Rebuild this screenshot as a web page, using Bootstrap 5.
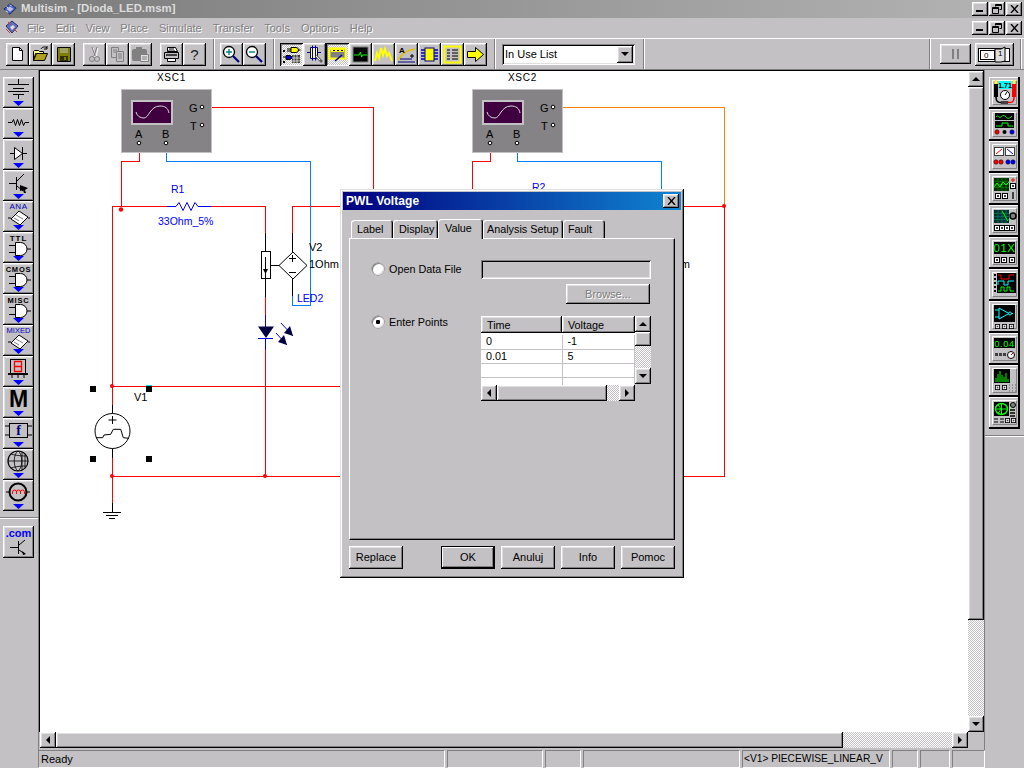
<!DOCTYPE html>
<html lang="en">
<head>
<meta charset="UTF-8">
<title>Multisim - [Dioda_LED.msm]</title>
<link href="https://cdn.jsdelivr.net/npm/bootstrap@5.3.0/dist/css/bootstrap.min.css" rel="stylesheet">
<style>
    body { margin: 0; width: 1024px; height: 768px; overflow: hidden; background: #c3c1c3; color: #000; font: 11px/1 "Liberation Sans", Arial, sans-serif; }
    svg { display: block; }
    svg text { font-family: "Liberation Sans", Arial, sans-serif; }

    .raised { background: #c3c1c3; box-shadow: inset -1px -1px #000, inset 1px 1px #fff, inset -2px -2px #808080, inset 2px 2px #dfdfdf; }
    .sunken { box-shadow: inset 1px 1px #808080, inset -1px -1px #fff, inset 2px 2px #000, inset -2px -2px #dfdfdf; }
    .dither { background: repeating-conic-gradient(#fff 0 25%, #c3c1c3 0 50%) 0 0 / 2px 2px; }

    .title-row { height: 18px; padding-left: 3px; background: linear-gradient(90deg, #7b7b7b, #b4b4b4); color: #dcdcdc; font-weight: 700; font-size: 11.4px; }
    .menu-row { height: 20px; padding-left: 5px; }
    .menu-item { color: #808080; text-shadow: 1px 1px 0 #fff; margin-right: 11px; }
    .win-group { margin-right: 2px; gap: 1px; }
    .win-btn { width: 16px; height: 14px; }
    .tool-row { height: 32px; padding-left: 6px; border-top: 1px solid #fff; border-bottom: 1px solid #808080; }
    .tb { width: 23px; height: 23px; flex: none; }
    .tb-on { box-shadow: inset 1px 1px #000, inset -1px -1px #fff, inset 2px 2px #808080; }
    .tb-help { font-size: 15px; color: #202020; }
    .tb-sep { width: 2px; height: 30px; flex: none; margin: 0 5px 0 7px; border-left: 1px solid #808080; border-right: 1px solid #fff; }
    .sep-a { margin-right: 0; }
    .sep-b { margin: 0 0 0 8px; }
    .sep-c { margin: 0; }
    .sep-d { margin: 0 2px 0 6px; }
    .combo { width: 133px; height: 21px; margin-left: 6px; padding: 2px 2px 2px 3px; background: #fff; font-size: 11px; }
    .combo-btn { width: 16px; height: 17px; }
    .pause-btn { width: 31px; height: 20px; margin-left: 9px; }
    .power-btn { width: 39px; height: 23px; margin-left: 4px; }

    .left-bar { width: 39px; flex: none; padding: 7px 0 0 3px; border-right: 1px solid #808080; }
    .pal { width: 31px; height: 31px; flex: none; }
    .pal-tall { height: 32px; }
    .pal-gap { width: 38px; height: 2px; margin: 6px 0 7px -3px; border-top: 1px solid #808080; border-bottom: 1px solid #fff; }
    .serif-f { font-family: "Liberation Serif", serif !important; }
    .right-bar { width: 40px; flex: none; padding: 7px 0 0 4px; border-left: 1px solid #808080; }
    .ins { width: 31px; height: 32px; flex: none; box-shadow: inset -2px -2px #000, inset 1px 1px #fff; background: #c3c1c3; }
    .ins-gap { width: 39px; height: 2px; margin: 6px 0 0 -4px; border-top: 1px solid #808080; border-bottom: 1px solid #fff; }

    .work { width: 945px; flex: none; }
    .sheet-row { height: 662px; border-top: 1px solid #000; }
    .sheet { width: 929px; border-left: 1px solid #000; background: #fff; }
    .vbar { width: 16px; }
    .vthumb { height: 533px; }
    .hbar { width: 928px; height: 16px; margin-left: 1px; }
    .hthumb { width: 787px; }
    .sb-btn { width: 16px; height: 16px; flex: none; }
    .ar-up, .ar-down, .ar-left, .ar-right { width: 0; height: 0; border: 4px solid transparent; }
    .ar-up { border-bottom-color: #000; margin-bottom: 4px; }
    .ar-down { border-top-color: #000; margin-top: 4px; }
    .ar-left { border-right-color: #000; margin-right: 4px; }
    .ar-right { border-left-color: #000; margin-left: 4px; }

    .status-row { height: 18px; padding-left: 38px; }
    .status-cell { height: 18px; padding: 3px 2px 0; margin-right: 2px; border: 1px solid; border-color: #808080 #fff #fff #808080; overflow: hidden; white-space: nowrap; flex: none; }
    .status-long { padding: 3px 0 0 1px; font-size: 10.2px; }
    .sw-a { width: 407px; } .sw-b { width: 96px; } .sw-c { width: 36px; } .sw-d { width: 157px; } .sw-e { width: 148px; } .sw-f { width: 26px; } .sw-g { width: 30px; } .sw-h { width: 33px; }

    .dlg { left: 300px; top: 118px; width: 344px; height: 389px; padding: 3px; background: #c3c1c3; box-shadow: inset -1px -1px #000, inset 1px 1px #dfdfdf, inset -2px -2px #808080, inset 2px 2px #fff; }
    .dlg-title { height: 18px; padding: 0 2px 0 3px; background: linear-gradient(90deg, #000080, #1084d0); color: #fff; font-weight: 700; font-size: 12px; letter-spacing: .1px; }
    .dlg-x { width: 16px; height: 14px; }
    .dlg .nav-tabs { margin: 8px 0 0 8px; height: 20px; border: 0; flex-wrap: nowrap; align-items: flex-end; }
    .dlg .nav-link { height: 18px; margin: 0; padding: 4px 0 0 6px; background: #c3c1c3; color: #000; font-size: 10.8px; border: 0; border-radius: 3px 3px 0 0; box-shadow: inset 1px 1px #fff, inset -1px 0 #000, inset -2px 0 #808080; white-space: nowrap; }
    .dlg .nav-link.active { height: 20px; padding: 4px 0 0 7px; background: #c3c1c3; color: #000; box-shadow: inset 1px 1px #fff, inset -1px 0 #000, inset -2px 0 #808080; position: relative; z-index: 1; margin-bottom: -1px; }
    .dlg .nav-item:nth-child(1) .nav-link { width: 42px; }
    .dlg .nav-item:nth-child(2) .nav-link { width: 45px; }
    .dlg .nav-item:nth-child(3) .nav-link { width: 45px; }
    .dlg .nav-item:nth-child(4) .nav-link { width: 80px; padding-left: 4px; }
    .dlg .nav-item:nth-child(5) .nav-link { width: 42px; padding-left: 5px; }
    .dlg-panel { height: 302px; margin: 0 6px; padding: 21px 0 0 22px; border-top: 1px solid #fff; border-left: 1px solid #fff; border-right: 1px solid #000; border-bottom: 1px solid #000; box-shadow: inset -1px -1px #808080; }
    .opt { width: 109px; flex: none; font-size: 10.8px; gap: 5px; height: 12px; }
    .opt-first { margin-top: 3px; }
    .opt input { width: 12px; height: 12px; margin: 0; flex: none; appearance: none; border-radius: 50%; background: #fff; box-shadow: inset 1px 1px #808080, inset -1px -1px #dfdfdf, 0 0 0 .5px #808080; }
    .opt input:checked { background: radial-gradient(circle, #000 0 2px, #fff 2.4px); }
    .file-box { width: 170px; height: 19px; flex: none; }
    .browse.btn { width: 84px; height: 20px; margin: 5px 0 0 194px; padding: 0; border: 0; border-radius: 0; font-size: 11px; color: #808080; text-shadow: 1px 1px 0 #fff; }
    .points-row { margin-top: 12px; }
    .grid-wrap { width: 170px; flex: none; }
    .grid-main { width: 154px; flex: none; }
    .grid-head { height: 17px; font-size: 10.8px; }
    .grid-head div { padding: 4px 0 0 6px; }
    .grid-body { height: 52px; overflow: hidden; background: #fff; padding-top: 2px; }
    .grid-body table { width: 154px; border-collapse: collapse; table-layout: fixed; font-size: 10.8px; }
    .grid-body td { height: 14px; padding: 0 0 0 5px; border: 1px solid #c3c1c3; border-top: 0; border-left: 0; }
    .col-t { width: 81px; }
    .grid-hbar { height: 16px; }
    .grid-hthumb { width: 110px; }
    .grid-vbar { width: 16px; height: 68px; }
    .grid-vthumb { height: 14px; }
    .dlg-actions { margin: 6px 6px 0; gap: 6px; }
    .d-btn { width: 54px; height: 23px; padding: 0; font-size: 11px; color: #000; border: 0; border-radius: 0; background: #c3c1c3; }
    .d-btn.btn:hover, .d-btn.btn:active { background: #c3c1c3; color: #000; }
    .d-default { outline: 1px solid #000; outline-offset: -1px; box-shadow: inset -2px -2px #000, inset 2px 2px #fff, inset -3px -3px #808080; }
</style>
</head>
<body>

<svg width="0" height="0" class="position-absolute">
    <defs>
        <symbol id="drop" viewBox="0 0 31 31"><path d="M10 24h11l-5.500 5z" fill="#0000ff"/></symbol>
        <symbol id="gate" viewBox="0 0 31 31"><path d="M12.500 10.500h5a6.500 6.500 0 0 1 0 13h-5zM6 13.500h6M6 20.500h6M24 17h4" fill="#fff" stroke="#000"/></symbol>
        <symbol id="pn" viewBox="0 0 31 32"><path d="M3.500 27V3.500H27" fill="none" stroke="#fff"/><path d="M4 27.500h23.500V4" fill="none" stroke="#808080"/></symbol>
        <symbol id="bx" viewBox="0 0 6 6"><rect x=".5" y=".5" width="5" height="5" fill="#fff" stroke="#000"/><rect x="2" y="2" width="2" height="2" fill="#404040"/></symbol>
    </defs>
</svg>

<div class="d-flex flex-column vh-100">

    <!-- title bar -->
    <div class="title-row d-flex align-items-center">
        <svg width="14" height="14" viewBox="0 0 16 14"><path d="M1 7l7-6 7 5-7 7z" fill="#4060c0" stroke="#202060"/><path d="M4 7l4-3 4 3-4 3z" fill="#c0c0e0"/><path d="M4 4l2 2M8 2l2 2M3 9l3 2" stroke="#fff"/></svg>
        <span class="ms-1">Multisim - [Dioda_LED.msm]</span>
        <div class="ms-auto d-flex win-group">
            <div class="win-btn raised d-flex align-items-end justify-content-center pb-1"><svg width="8" height="2"><rect width="7" height="2"/></svg></div>
            <div class="win-btn raised d-flex align-items-center justify-content-center"><svg width="10" height="10"><path d="M3.500 2.500V.5h6v5h-2M.5 3.500h6v6h-6zM.5 4.500h6M3.500 1.500h6" fill="none" stroke="#000"/></svg></div>
            <div class="win-btn raised d-flex align-items-center justify-content-center"><svg width="9" height="8"><path d="M1 0l7 8M8 0L1 8" stroke="#000" stroke-width="1.400"/></svg></div>
        </div>
    </div>

    <!-- menu bar -->
    <div class="menu-row d-flex align-items-center">
        <svg class="me-2" width="14" height="16" viewBox="0 0 14 16"><path d="M1 6l6-5 6 5-6 7z" fill="#6070c0" stroke="#303060"/><path d="M3 2l3 3M1 9l4 4M8 8l4 4" stroke="#c04040"/><path d="M5 7l3-2 2 2-3 3z" fill="#e0e0e0"/></svg>
        <span class="menu-item">File</span><span class="menu-item">Edit</span><span class="menu-item">View</span><span class="menu-item">Place</span><span class="menu-item">Simulate</span><span class="menu-item">Transfer</span><span class="menu-item">Tools</span><span class="menu-item">Options</span><span class="menu-item">Help</span>
        <div class="ms-auto d-flex win-group">
            <div class="win-btn raised d-flex align-items-end justify-content-center pb-1"><svg width="8" height="2"><rect width="7" height="2"/></svg></div>
            <div class="win-btn raised d-flex align-items-center justify-content-center"><svg width="10" height="10"><path d="M3.500 2.500V.5h6v5h-2M.5 3.500h6v6h-6zM.5 4.500h6M3.500 1.500h6" fill="none" stroke="#000"/></svg></div>
            <div class="win-btn raised d-flex align-items-center justify-content-center"><svg width="9" height="8"><path d="M1 0l7 8M8 0L1 8" stroke="#000" stroke-width="1.400"/></svg></div>
        </div>
    </div>

    <!-- main toolbar -->
    <div class="tool-row d-flex align-items-center">
        <div class="tb raised"><svg width="23" height="23"><path d="M6.500 4.500h7l3 3v10h-10z" fill="#fff" stroke="#000"/><path d="M13.500 4.500v3h3" fill="none" stroke="#000"/></svg></div>
        <div class="tb raised"><svg width="23" height="23"><path d="M4.500 17.500v-9l1-1h4l1 1h4v2h-8z" fill="#ffff99" stroke="#000"/><path d="M4.500 17.500l3-7h11l-3 7z" fill="#b0a020" stroke="#000"/><path d="M12 6c1-2 4-3 6-1M18 3v3h-3" fill="none" stroke="#000"/></svg></div>
        <div class="tb raised me-2"><svg width="23" height="23"><path d="M5.500 4.500h13v14h-13z" fill="#808000" stroke="#000"/><rect x="8" y="5" width="8" height="5" fill="#a0a060"/><rect x="8" y="13" width="8" height="5" fill="#303000"/><rect x="12" y="14" width="2" height="3" fill="#808000"/></svg></div>
        <div class="tb raised"><svg width="23" height="23"><g fill="none" stroke="#fff" transform="translate(1 1)"><path d="M9 4l2 9M14 4l-2 9"/></g><g fill="none" stroke="#808080"><path d="M9 4l3 9M14 4l-3 9"/><circle cx="9" cy="16" r="2.500"/><circle cx="14" cy="16" r="2.500"/></g></svg></div>
        <div class="tb raised"><svg width="23" height="23"><g fill="#c3c1c3" stroke="#808080"><path d="M5.500 4.500h7v10h-7z"/><path d="M10.500 8.500h7v10h-7z"/><path d="M7 7h4M7 9h3M12 11h4M12 13h4M12 15h4"/></g></svg></div>
        <div class="tb raised me-2"><svg width="23" height="23"><rect x="3" y="6" width="15" height="12" rx="2" fill="#808080"/><rect x="7" y="4" width="6" height="3" fill="#808080"/><path d="M11.500 11.500h8v7h-8z" fill="#dfdfdf" stroke="#808080"/><path d="M13 14h5M13 16h5" stroke="#808080"/></svg></div>
        <div class="tb raised"><svg width="23" height="23"><path d="M7.500 4.500h8l2 4h-10z" fill="#fff" stroke="#000"/><path d="M4.500 9.500h14v6h-14z" fill="#c3c1c3" stroke="#000"/><path d="M7.500 15.500h8v3h-8z" fill="#fff" stroke="#000"/><path d="M9 6h5M8 8h7" stroke="#000"/><rect x="6" y="11" width="11" height="2" fill="#404040"/></svg></div>
        <div class="tb tb-help raised d-flex align-items-center justify-content-center">?</div>
        <div class="tb-sep"></div>
        <div class="tb raised"><svg width="23" height="23"><circle cx="9" cy="9" r="5.500" fill="#fff" stroke="#000" stroke-width="1.300"/><path d="M9 6v6M6 9h6" stroke="#008080" stroke-width="1.400"/><path d="M13 13l6 6" stroke="#000080" stroke-width="2.200"/></svg></div>
        <div class="tb raised"><svg width="23" height="23"><circle cx="9" cy="9" r="5.500" fill="#fff" stroke="#000" stroke-width="1.300"/><path d="M6 9h6" stroke="#008080" stroke-width="1.400"/><path d="M13 13l6 6" stroke="#000080" stroke-width="2.200"/></svg></div>
        <div class="tb-sep"></div>
        <div class="tb tb-on dither"><svg width="23" height="23"><path d="M11 4.500h5a2.500 2.500 0 0 1 0 5h-5zM7 6h4M7 8h4M18.500 7h2" fill="#ffff00" stroke="#000"/><path d="M6 12.500h4l3 2-3 2H6z" fill="#0000c0" stroke="#000"/><path d="M3 14h3M13 14h2" stroke="#000"/><rect x="12" y="12" width="8" height="8" fill="#404040"/><path d="M14 12v8M17 12v8M12 15h8M12 18h8" stroke="#fff" stroke-width=".7"/><rect x="3" y="7" width="2" height="2"/><rect x="3" y="18" width="2" height="2"/></svg></div>
        <div class="tb raised"><svg width="23" height="23"><path d="M7.500 4.500h7v11h-7z" fill="#ffff80" stroke="#000080"/><path d="M9.500 2.500v15M12.500 2.500v15M4 9.500h3M15 9.500h3" stroke="#000080"/><path d="M13 13l6 6" stroke="#606060" stroke-width="2.500"/><path d="M13 13l4 4" stroke="#fff"/></svg></div>
        <div class="tb tb-on dither"><svg width="23" height="23"><rect x="3.500" y="5.500" width="16" height="10" fill="#808080" stroke="#ffff00" stroke-width="2"/><path d="M5 6h13v3H5z" fill="#ffff00"/><path d="M7 7.500h2M11 7.500h2M15 7.500h2" stroke="#000"/><path d="M9 18l7-6" stroke="#0000c0" stroke-width="1.500"/></svg></div>
        <div class="tb raised"><svg width="23" height="23"><rect x="4" y="4" width="15" height="15" fill="#000" stroke="#808080"/><path d="M5 12h5l1.500-3 1 5 1-2h5" fill="none" stroke="#00ff00"/></svg></div>
        <div class="tb raised"><svg width="23" height="23"><path d="M3 18l2-8 2 5 2-10 2 7 2-6 2 7 2-3 3 8" fill="none" stroke="#ffff00" stroke-width="2"/></svg></div>
        <div class="tb raised"><svg width="23" height="23"><path d="M3 17C7 10 12 7 20 6" fill="none" stroke="#e0c000" stroke-width="1.500"/><path d="M3 19h17M5 16h12" stroke="#000080"/><text x="4" y="10" font-size="8" font-weight="700">A</text><path d="M15 13h4M17 11v4" stroke="#000"/></svg></div>
        <div class="tb raised"><svg width="23" height="23"><rect x="7" y="5" width="9" height="13" fill="#ffff00" stroke="#000080"/><path d="M3 7h4M3 10h4M3 13h4M3 16h4M16 7h4M16 10h4M16 13h4M16 16h4" stroke="#0000c0" stroke-width="1.500"/></svg></div>
        <div class="tb raised"><svg width="23" height="23"><rect x="3.500" y="3.500" width="16" height="16" fill="#c3c1c3" stroke="#ffff00" stroke-width="2"/><path d="M6 7h3M11 7h6M6 10h3M11 10h6M6 13h3M11 13h6M6 16h3M11 16h6" stroke="#000"/></svg></div>
        <div class="tb raised"><svg width="23" height="23"><path d="M3.500 8.500h8v-4l8 7-8 7v-4h-8z" fill="#ffff00" stroke="#000"/></svg></div>
        <div class="tb-sep sep-a"></div>
        <div class="combo sunken d-flex align-items-center justify-content-between">
            <span>In Use List</span>
            <div class="combo-btn raised d-flex align-items-center justify-content-center"><div class="ar-down"></div></div>
        </div>
        <div class="tb-sep sep-b"></div>
        <div class="ms-auto tb-sep sep-c"></div>
        <div class="pause-btn raised d-flex align-items-center justify-content-center"><svg width="10" height="10"><rect x="1" width="2" height="10" fill="#808080"/><rect x="6" width="2" height="10" fill="#808080"/></svg></div>
        <div class="power-btn raised d-flex align-items-center justify-content-center"><svg width="33" height="17"><rect x=".5" y="2.500" width="31" height="13" fill="#fff" stroke="#000"/><rect x="2.500" y="4.500" width="14" height="9" fill="#fff" stroke="#000"/><text x="6" y="12" font-size="8">0</text><path d="M17 3h6l4-2v14l-4 1h-6z" fill="#dfdfdf" stroke="#000"/><text x="20" y="10" font-size="8">1</text></svg></div>
        <div class="tb-sep sep-d"></div>
    </div>

    <div class="d-flex flex-grow-1 overflow-hidden">
        <!-- component palette -->
        <div class="left-bar d-flex flex-column">
            <div class="pal raised"><svg width="31" height="31"><path d="M15.500 2v5M5 7.500h21M10 11.500h11M5 14.500h21M10 17.500h11M15.500 18v4" stroke="#000"/><use href="#drop"/></svg></div>
            <div class="pal raised"><svg width="31" height="31"><path d="M5 14.500h4l1.500-3 2 6 2-6 2 6 2-6 2 6 1.500-3h4" fill="none" stroke="#000"/><use href="#drop"/></svg></div>
            <div class="pal raised"><svg width="31" height="31"><path d="M7 14.500h4M11.500 8.500v12l8-6zM19.500 8v13M20 14.500h4" fill="#fff" stroke="#000"/><use href="#drop"/></svg></div>
            <div class="pal raised"><svg width="31" height="31"><path d="M6 13.500h7M13.500 7v13M14 11l7-7M14 16l6 5" fill="none" stroke="#000"/><path d="M17 15l8 3-3 2 1 3-2 0-1-3-3 1z" fill="#000"/><use href="#drop"/></svg></div>
            <div class="pal raised"><svg width="31" height="31"><text x="15.500" y="7.500" font-size="8" fill="#0000c0" text-anchor="middle" letter-spacing=".5">ANA</text><path d="M16 10l9 6-8 8-9-6z" fill="#fff" stroke="#000"/><path d="M13 14l7 4M11 17l5 3" stroke="#808080"/><path d="M5 17h3M25 17h2" stroke="#000"/><use href="#drop"/></svg></div>
            <div class="pal raised"><svg width="31" height="31"><text x="15.500" y="8.500" font-size="8" font-weight="700" text-anchor="middle" letter-spacing="1">TTL</text><use href="#gate"/><use href="#drop"/></svg></div>
            <div class="pal raised"><svg width="31" height="31"><text x="15.500" y="8.500" font-size="7.500" font-weight="700" text-anchor="middle" letter-spacing=".8">CMOS</text><use href="#gate"/><use href="#drop"/></svg></div>
            <div class="pal raised"><svg width="31" height="31"><text x="15.500" y="8.500" font-size="7.500" font-weight="700" text-anchor="middle" letter-spacing=".8">MISC</text><use href="#gate"/><use href="#drop"/></svg></div>
            <div class="pal raised"><svg width="31" height="31"><text x="15.500" y="8" font-size="7.500" fill="#0000c0" text-anchor="middle">MIXED</text><path d="M16 10l9 6-8 8-9-6z" fill="#fff" stroke="#000"/><path d="M13 14l7 4M11 17l5 3" stroke="#808080"/><path d="M5 17h3M25 17h2" stroke="#000"/><use href="#drop"/></svg></div>
            <div class="pal raised"><svg width="31" height="31"><rect x="7.500" y="3.500" width="15" height="14" fill="#c3c1c3" stroke="#000"/><rect x="5" y="17" width="20" height="2"/><path d="M11.500 5.500h7v10h-7zM11.500 10.500h7" fill="none" stroke="#ff0000" stroke-width="1.300"/><path d="M9 19v3M15 19v3M21 19v3" stroke="#000"/><use href="#drop"/></svg></div>
            <div class="pal raised"><svg width="31" height="31"><text x="15.500" y="20" font-size="23" font-weight="700" text-anchor="middle">M</text><use href="#drop"/></svg></div>
            <div class="pal raised"><svg width="31" height="31"><rect x="6.500" y="5.500" width="18" height="14" fill="#c3c1c3" stroke="#000"/><path d="M2 8h4M2 17h4M25 8h4M25 17h4" stroke="#000"/><text class="serif-f" x="15.500" y="17" font-size="14" font-weight="700" fill="#000080" text-anchor="middle">f</text><use href="#drop"/></svg></div>
            <div class="pal raised"><svg width="31" height="31"><circle cx="15" cy="12" r="10" fill="#c3c1c3" stroke="#000" stroke-width="1.200"/><path d="M5 12h20M15 2c-5 3-5 17 0 20M15 2c5 3 5 17 0 20M8 5c6 2 14 2 15 2M8 19c6-2 14-2 15-2M19 3v18M22 5v14" fill="none" stroke="#000" stroke-width=".8"/><use href="#drop"/></svg></div>
            <div class="pal raised"><svg width="31" height="31"><path d="M3 12h3M24 12h3" stroke="#000"/><circle cx="15" cy="12" r="8.500" fill="#c3c1c3" stroke="#000" stroke-width="2"/><path d="M9.500 14v-2a2 2 0 0 1 4 0v2M13.500 14v-2a2 2 0 0 1 4 0v2M17.500 14v-2a2 2 0 0 1 4 0v2" fill="none" stroke="#ff0000"/><use href="#drop"/></svg></div>
            <div class="pal-gap"></div>
            <div class="pal pal-tall raised"><svg width="31" height="32"><text x="15.500" y="11" font-size="11" font-weight="700" fill="#0000ff" text-anchor="middle">.com</text><path d="M7 21.500h8M15.500 15v13M16 19l6-5M16 24l6 4" fill="none" stroke="#000"/><path d="M19 25l4 3-3 1z" fill="#000"/></svg></div>
        </div>

        <div class="work d-flex flex-column">
            <div class="sheet-row d-flex">
                <div class="sheet position-relative">
                    <!-- schematic -->
                    <svg width="928" height="661" viewBox="40 71 928 661">
                        <g fill="none" stroke="#ff0000" shape-rendering="crispEdges">
                            <path d="M202 107.500H373.500V195M139.500 146V161.500H121.500V206.500M112.500 405V206.500H167M211 206.500H265.500V233M292.500 233V206.500H345M265.500 297V315M265.500 350V476.500M112.500 386.500H146M152 386.500H345M112.500 458V503M112.500 476.500H345"/>
                            <path d="M490.500 146V161.500H472.500V195M680 206.500H724.500V476.500H680"/>
                        </g>
                        <g fill="none" stroke="#0080ff" shape-rendering="crispEdges"><path d="M166.500 146V161.500H310.500V305.500H292.500V296"/><path d="M517.500 146V161.500H661.500V195"/></g>
                        <path d="M553 107.500H724.500V205" fill="none" stroke="#ff8000" shape-rendering="crispEdges"/>
                        <path d="M146 385.500h6" stroke="#00e0e0" shape-rendering="crispEdges"/>
                        <g fill="#ff0000"><circle cx="121" cy="209.500" r="2.200"/><circle cx="112" cy="386" r="2"/><circle cx="112" cy="476" r="2"/><circle cx="265" cy="476" r="2"/><circle cx="724" cy="206" r="2"/></g>

                        <!-- instruments -->
                        <g>
                            <rect x="121.500" y="89.500" width="90" height="63" fill="#858385" stroke="#c3c1c3"/>
                            <rect x="132" y="101" width="40" height="23" fill="#400040" stroke="#c3c1c3" stroke-width="2"/>
                            <path d="M136 112C137 116 140 118 144 118C149 118 150 106 160 106C165 106 168 108 169 113" fill="none" stroke="#d8d8d8"/>
                            <g fill="#fff" stroke="#000"><circle cx="139" cy="143" r="1.800"/><circle cx="166" cy="143" r="1.800"/><circle cx="202" cy="107" r="1.800"/><circle cx="202" cy="125" r="1.800"/></g>
                            <g font-size="11"><text x="135" y="138">A</text><text x="162" y="138">B</text><text x="189" y="112">G</text><text x="190" y="130">T</text></g>
                        </g>
                        <g>
                            <rect x="472.500" y="89.500" width="90" height="63" fill="#858385" stroke="#c3c1c3"/>
                            <rect x="483" y="101" width="40" height="23" fill="#400040" stroke="#c3c1c3" stroke-width="2"/>
                            <path d="M487 112C488 116 491 118 495 118C500 118 501 106 511 106C516 106 519 108 520 113" fill="none" stroke="#d8d8d8"/>
                            <g fill="#fff" stroke="#000"><circle cx="490" cy="143" r="1.800"/><circle cx="517" cy="143" r="1.800"/><circle cx="553" cy="107" r="1.800"/><circle cx="553" cy="125" r="1.800"/></g>
                            <g font-size="11"><text x="486" y="138">A</text><text x="513" y="138">B</text><text x="540" y="112">G</text><text x="541" y="130">T</text></g>
                        </g>
                        <g font-size="10" letter-spacing=".7"><text x="157" y="81">XSC1</text><text x="508" y="81">XSC2</text></g>

                        <!-- R1 -->
                        <path d="M167 206.500h9l3-4 4 8 4-8 4 8 4-8 3 4h13" fill="none" stroke="#0000ff"/>
                        <g font-size="10.500" fill="#0000ff"><text x="171" y="193">R1</text><text x="158" y="225">33Ohm_5%</text><text x="297" y="302">LED2</text><text x="532" y="191">R2</text></g>
                        <g font-size="11"><text x="309" y="251">V2</text><text x="309" y="268">1Ohm</text><text x="660" y="268">1Ohm</text><text x="134" y="401">V1</text></g>

                        <!-- current probe and controlled source -->
                        <g fill="#fff" stroke="#000" shape-rendering="crispEdges">
                            <path d="M265.500 233V251M265.500 279V297M292.500 233V252M292.500 278V296M271 265.500H279" fill="none"/>
                            <rect x="261.500" y="251.500" width="9" height="27"/>
                            <path d="M265.500 257V278" fill="none"/>
                        </g>
                        <path d="M263 269h5l-2.500 5z"/>
                        <path d="M293 252l14 13.500-14 13.500-14-13.500z" fill="#fff" stroke="#000"/>
                        <path d="M289 258.500h7M292.500 255v7M289 272.500h7" stroke="#000"/>

                        <!-- LED -->
                        <path d="M265.500 315V327M258 338.500H273M265.500 339V350" stroke="#0000ff" shape-rendering="crispEdges"/>
                        <path d="M258 326.500h16l-8 11.500z" fill="#000040"/>
                        <path d="M281 323l12 13M276 333l11 12" stroke="#0000ff"/>
                        <path d="M293 336l-9-3 6-7zM287 345l-9-3 6-7z" fill="#000040"/>

                        <!-- V1 -->
                        <circle cx="112.500" cy="431" r="17.500" fill="#fff" stroke="#000"/>
                        <path d="M112.500 405V413.500M112.500 448.500V458M108.500 420h8M112.500 416v8" stroke="#000"/>
                        <path d="M96 437.700H102.700L104 435L110.700 434.300L113.300 429.300H120.700L123.300 437.700L129 438.300" fill="none" stroke="#000"/>
                        <path d="M112.500 503V512M103 512.500H121M106 515.500H118M109 518.500H115" stroke="#000" shape-rendering="crispEdges"/>
                        <g><rect x="90" y="386" width="6" height="6"/><rect x="146" y="386" width="6" height="6"/><rect x="90" y="456" width="6" height="6"/><rect x="146" y="456" width="6" height="6"/></g>
                    </svg>

                    <!-- PWL Voltage dialog -->
                    <div class="dlg position-absolute d-flex flex-column">
                        <div class="dlg-title d-flex align-items-center justify-content-between">
                            <span>PWL Voltage</span>
                            <div class="dlg-x raised d-flex align-items-center justify-content-center"><svg width="9" height="8"><path d="M1 0l7 8M8 0L1 8" stroke="#000" stroke-width="1.400"/></svg></div>
                        </div>
                        <ul class="nav nav-tabs">
                            <li class="nav-item"><a class="nav-link" href="#">Label</a></li>
                            <li class="nav-item"><a class="nav-link" href="#">Display</a></li>
                            <li class="nav-item"><a class="nav-link active" href="#">Value</a></li>
                            <li class="nav-item"><a class="nav-link" href="#">Analysis Setup</a></li>
                            <li class="nav-item"><a class="nav-link" href="#">Fault</a></li>
                        </ul>
                        <div class="dlg-panel">
                            <div class="d-flex">
                                <label class="opt opt-first d-flex align-items-center"><input type="radio" name="src"><span>Open Data File</span></label>
                                <div class="file-box sunken"></div>
                            </div>
                            <button class="browse raised btn d-flex align-items-center justify-content-center">Browse...</button>
                            <div class="points-row d-flex">
                                <label class="opt d-flex align-items-center"><input type="radio" name="src" checked><span>Enter Points</span></label>
                                <div class="grid-wrap d-flex">
                                    <div class="grid-main">
                                        <div class="grid-head d-flex">
                                            <div class="raised col-t">Time</div>
                                            <div class="raised flex-grow-1">Voltage</div>
                                        </div>
                                        <div class="grid-body">
                                            <table>
                                                <tr><td class="col-t">0</td><td>-1</td></tr>
                                                <tr><td class="col-t">0.01</td><td>5</td></tr>
                                                <tr><td class="col-t">&nbsp;</td><td></td></tr>
                                                <tr><td class="col-t">&nbsp;</td><td></td></tr>
                                            </table>
                                        </div>
                                        <div class="grid-hbar d-flex">
                                            <div class="sb-btn raised d-flex align-items-center justify-content-center"><div class="ar-left"></div></div>
                                            <div class="grid-hthumb raised"></div>
                                            <div class="dither flex-grow-1"></div>
                                            <div class="sb-btn raised d-flex align-items-center justify-content-center"><div class="ar-right"></div></div>
                                        </div>
                                    </div>
                                    <div class="grid-vbar d-flex flex-column">
                                        <div class="sb-btn raised d-flex align-items-center justify-content-center"><div class="ar-up"></div></div>
                                        <div class="grid-vthumb raised"></div>
                                        <div class="dither flex-grow-1"></div>
                                        <div class="sb-btn raised d-flex align-items-center justify-content-center"><div class="ar-down"></div></div>
                                    </div>
                                </div>
                            </div>
                        </div>
                        <div class="dlg-actions d-flex">
                            <button class="btn d-btn raised me-auto">Replace</button>
                            <button class="btn d-btn d-default">OK</button>
                            <button class="btn d-btn raised">Anuluj</button>
                            <button class="btn d-btn raised">Info</button>
                            <button class="btn d-btn raised">Pomoc</button>
                        </div>
                    </div>
                </div>
                <!-- vertical scrollbar -->
                <div class="vbar d-flex flex-column">
                    <div class="sb-btn raised d-flex align-items-center justify-content-center"><div class="ar-up"></div></div>
                    <div class="vthumb raised"></div>
                    <div class="dither flex-grow-1"></div>
                    <div class="sb-btn raised d-flex align-items-center justify-content-center"><div class="ar-down"></div></div>
                </div>
            </div>
            <!-- horizontal scrollbar -->
            <div class="hbar d-flex">
                <div class="sb-btn raised d-flex align-items-center justify-content-center"><div class="ar-left"></div></div>
                <div class="hthumb raised"></div>
                <div class="dither flex-grow-1"></div>
                <div class="sb-btn raised d-flex align-items-center justify-content-center"><div class="ar-right"></div></div>
            </div>
        </div>

        <!-- instruments palette -->
        <div class="right-bar d-flex flex-column">
            <div class="ins"><svg width="31" height="32"><use href="#pn"/><rect x="6" y="3" width="2" height="4" fill="#ffff00"/><rect x="5" y="7" width="4" height="13"/><rect x="24" y="3" width="2" height="4" fill="#ffff00"/><rect x="23" y="7" width="4" height="13" fill="#ff0000"/><rect x="10" y="4" width="12" height="8" fill="#00ffff"/><text x="16" y="10.500" font-size="7" font-weight="700" text-anchor="middle">1.71</text><circle cx="16" cy="18" r="4.500" fill="#fff" stroke="#000"/><path d="M16 18l2-3" stroke="#000"/><path d="M7 20c0 6 4 6 8 5" fill="none" stroke="#000" stroke-width="1.500"/><path d="M25 20c0 6-3 6-8 5" fill="none" stroke="#ff0000" stroke-width="1.500"/><rect x="12" y="24" width="7" height="3" fill="#404040"/></svg></div>
            <div class="ins"><svg width="31" height="32"><use href="#pn"/><rect x="6" y="4" width="19" height="7"/><path d="M7 8c2-3 3 2 5 0s3-2 5 0 3 2 6-1" fill="none" stroke="#00ff00"/><rect x="6" y="12" width="19" height="7"/><path d="M7 17h6v-3h6v3h5" fill="none" stroke="#00ff00"/><circle cx="8" cy="23" r="2.200" fill="#ff0000" stroke="#000" stroke-width=".5"/><circle cx="15.500" cy="23" r="2"/><circle cx="23" cy="23" r="2.200" fill="#0000ff" stroke="#000" stroke-width=".5"/></svg></div>
            <div class="ins"><svg width="31" height="32"><use href="#pn"/><rect x="5.500" y="6.500" width="9" height="8" fill="#fff" stroke="#404040"/><rect x="16.500" y="6.500" width="9" height="8" fill="#fff" stroke="#404040"/><path d="M7 13l6-5" stroke="#ff0000"/><path d="M18 8l6 5" stroke="#0000ff"/><circle cx="7" cy="21" r="2.200" fill="#ff0000" stroke="#000" stroke-width=".5"/><circle cx="12" cy="21" r="2.200" fill="#ff0000" stroke="#000" stroke-width=".5"/><circle cx="19" cy="21" r="2.200" fill="#0000ff" stroke="#000" stroke-width=".5"/><circle cx="24" cy="21" r="2.200" fill="#0000ff" stroke="#000" stroke-width=".5"/></svg></div>
            <div class="ins"><svg width="31" height="32"><use href="#pn"/><rect x="5" y="5" width="15" height="13" fill="#003000"/><path d="M5 8.500h15M5 11.500h15M5 14.500h15M9 5v13M13 5v13M17 5v13" stroke="#008000" stroke-width=".7"/><path d="M5 14l3-4 3 4 3-5 3 3 3-3" fill="none" stroke="#00ff00"/><path d="M22 7h4M24 5v4" stroke="#ff0000"/><use href="#bx" x="21" y="10" width="6" height="6"/><use href="#bx" x="6" y="20" width="6" height="6"/><use href="#bx" x="13" y="20" width="6" height="6"/><rect x="23" y="19" width="2" height="7" fill="#404040"/></svg></div>
            <div class="ins"><svg width="31" height="32"><use href="#pn"/><rect x="5" y="5" width="15" height="13" fill="#003030"/><path d="M5 8.500h15M5 11.500h15M5 14.500h15M9 5v13M13 5v13M17 5v13" stroke="#008060" stroke-width=".7"/><path d="M13 6c3 4 4 8 6 10" fill="none" stroke="#00ff00"/><circle cx="24" cy="11" r="3" fill="#808080" stroke="#000" stroke-width="1.500"/><use href="#bx" x="5" y="20" width="6" height="6"/><use href="#bx" x="10" y="20" width="6" height="6"/><use href="#bx" x="15" y="20" width="6" height="6"/><use href="#bx" x="20" y="20" width="6" height="6"/></svg></div>
            <div class="ins"><svg width="31" height="32"><use href="#pn"/><rect x="5" y="5" width="21" height="12"/><text x="15.500" y="15" font-size="11.500" fill="#00ff00" text-anchor="middle" letter-spacing=".5">01X</text><use href="#bx" x="5" y="20" width="6" height="6"/><use href="#bx" x="12" y="20" width="6" height="6"/><use href="#bx" x="20" y="20" width="6" height="6"/></svg></div>
            <div class="ins"><svg width="31" height="32"><use href="#pn"/><rect x="8" y="4" width="19" height="20"/><path d="M9 6h3v4h8V6h5" fill="none" stroke="#ff0000"/><path d="M9 16v-4h6v4h4v-4h6" fill="none" stroke="#00ffff"/><path d="M9 22h3v-4h3v4h3v-4h3v4h4" fill="none" stroke="#00ff00"/><path d="M6 5v2M6 9v2M6 13v2M6 17v2M6 21v2" stroke="#000" stroke-width="2"/></svg></div>
            <div class="ins"><svg width="31" height="32"><use href="#pn"/><rect x="5" y="4" width="21" height="17"/><path d="M10 7v11l10-5.500zM6 9h4M6 16h4M20 12.500h4" fill="none" stroke="#00ffff"/><circle cx="21" cy="12.500" r="1.500" fill="#000" stroke="#00ffff"/><use href="#bx" x="6" y="23" width="5" height="5"/><use href="#bx" x="13" y="23" width="5" height="5"/><use href="#bx" x="20" y="23" width="5" height="5"/></svg></div>
            <div class="ins"><svg width="31" height="32"><use href="#pn"/><rect x="5" y="5" width="21" height="10"/><text x="15.500" y="13.500" font-size="9.500" fill="#00ff00" text-anchor="middle" letter-spacing=".5">0.04</text><rect x="6" y="20" width="3" height="3" fill="#404040"/><rect x="10" y="20" width="3" height="3" fill="#404040"/><rect x="14" y="20" width="3" height="3" fill="#404040"/><circle cx="22" cy="22" r="3.500" fill="#fff" stroke="#000"/><path d="M22 22l2-2" stroke="#ff0000"/></svg></div>
            <div class="ins"><svg width="31" height="32"><use href="#pn"/><rect x="5" y="4" width="16" height="14"/><path d="M7 17v-4M9 17V9M11 17V6M13 17v-7M15 17v-5M17 17V8M19 17v-3" stroke="#00ff00"/><use href="#bx" x="6" y="20" width="5" height="5"/><use href="#bx" x="13" y="20" width="5" height="5"/><path d="M20 20h1M23 20h1M26 20h1M20 23h1M23 23h1M26 23h1M20 26h1M23 26h1M26 26h1" stroke="#606060"/></svg></div>
            <div class="ins"><svg width="31" height="32"><use href="#pn"/><rect x="5" y="5" width="15" height="14"/><ellipse cx="12.500" cy="12" rx="6" ry="5.500" fill="none" stroke="#00ff00" stroke-width="1.500"/><path d="M7 12h11M12.500 7v10M9 8c3 2 3 6 0 8" fill="none" stroke="#00ff00"/><circle cx="24" cy="8" r="2.500" fill="#808080" stroke="#000"/><path d="M21 13h5M21 16h5M21 19h5" stroke="#000" stroke-width="1.500"/><path d="M5 22h4M11 22h4M5 25h4M11 25h4" stroke="#404040" stroke-width="1.500"/><use href="#bx" x="16" y="21" width="5" height="5"/><use href="#bx" x="22" y="21" width="5" height="5"/></svg></div>
            <div class="ins-gap"></div>
        </div>
    </div>

    <!-- status bar -->
    <div class="status-row d-flex">
        <div class="status-cell sw-a">Ready</div>
        <div class="status-cell sw-b"></div>
        <div class="status-cell sw-c"></div>
        <div class="status-cell sw-d"></div>
        <div class="status-cell status-long sw-e">&lt;V1&gt; PIECEWISE_LINEAR_V</div>
        <div class="status-cell sw-f"></div>
        <div class="status-cell sw-g"></div>
        <div class="status-cell sw-h"></div>
    </div>
</div>

<script src="https://cdn.jsdelivr.net/npm/bootstrap@5.3.0/dist/js/bootstrap.bundle.min.js"></script>
</body>
</html>
